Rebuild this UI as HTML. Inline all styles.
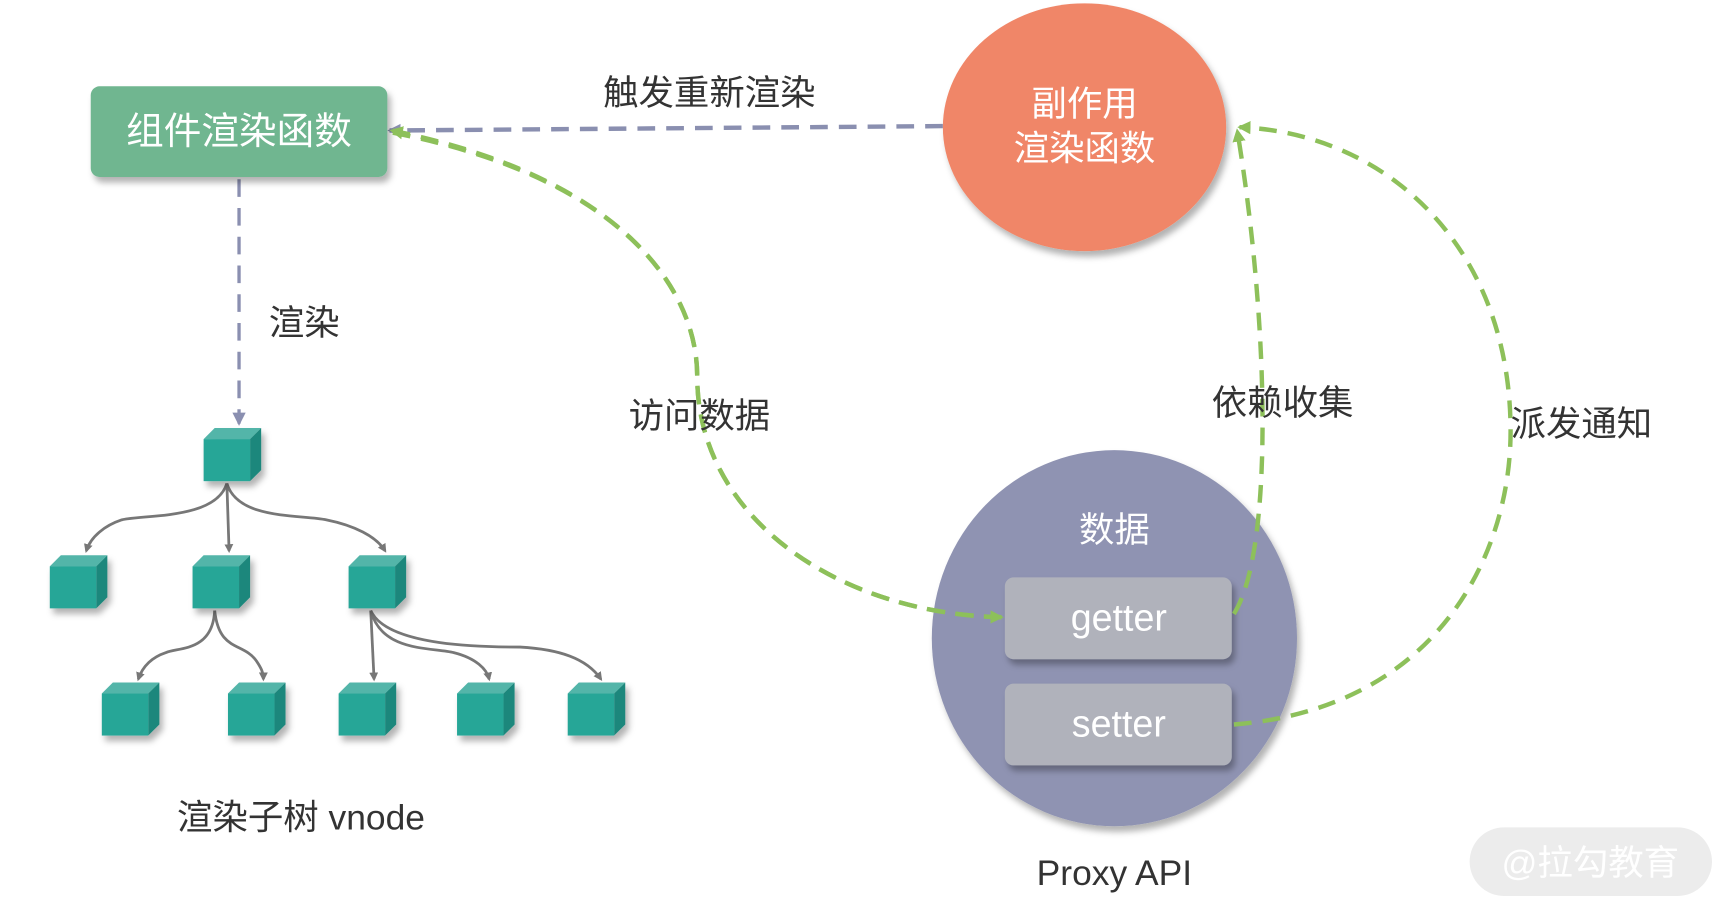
<!DOCTYPE html>
<html><head><meta charset="utf-8"><style>
html,body{margin:0;padding:0;background:#fff;}
svg{display:block;}
text{font-family:"Liberation Sans","Noto Sans CJK SC",sans-serif;}
</style></head><body>
<svg width="1712" height="907" viewBox="0 0 1547 820" preserveAspectRatio="none" xmlns="http://www.w3.org/2000/svg">
<defs>
<filter id="sh" x="-20%" y="-20%" width="150%" height="150%"><feDropShadow dx="3" dy="5" stdDeviation="3" flood-color="#000" flood-opacity="0.3"/></filter>
<marker id="ag" markerWidth="8" markerHeight="8" refX="6" refY="4" orient="auto" markerUnits="userSpaceOnUse" viewBox="0 0 8 8"><path d="M0,0 L8,4 L0,8 z" fill="#777"/></marker>
<marker id="ap" markerWidth="14" markerHeight="14" refX="10" refY="7" orient="auto" markerUnits="userSpaceOnUse"><path d="M0,1 L12,7 L0,13 z" fill="#8a8fb0"/></marker>
<marker id="agr" markerWidth="14" markerHeight="14" refX="10" refY="7" orient="auto" markerUnits="userSpaceOnUse"><path d="M0,1 L12,7 L0,13 z" fill="#8dc05a"/></marker>
<g id="cube"><polygon points="0,10 10,0 52,0 42,10" fill="#52b5a9"/><polygon points="42,10 52,0 52,38 42,48" fill="#1f877b"/><rect x="0" y="10" width="42" height="38" fill="#26a697"/></g>
</defs>

<!-- blue dashed -->
<path d="M852,114 L352,118" stroke="#8a8fb0" stroke-width="4" stroke-dasharray="16 10" fill="none" marker-end="url(#ap)"/>
<path d="M216,162 L216,383" stroke="#8a8fb0" stroke-width="3" stroke-dasharray="16 10" fill="none" marker-end="url(#ap)"/>

<rect x="82" y="78" width="268" height="82" rx="8" fill="#6fb690" filter="url(#sh)"/>
<text x="216" y="130" font-size="34" fill="#fff" text-anchor="middle">组件渲染函数</text>

<ellipse cx="980" cy="115" rx="128" ry="112" fill="#f08667" filter="url(#sh)"/>
<text x="980" y="105" font-size="32" fill="#fff" text-anchor="middle">副作用</text>
<text x="980" y="145" font-size="32" fill="#fff" text-anchor="middle">渲染函数</text>

<ellipse cx="1007" cy="577" rx="165" ry="170" fill="#8f93b2" filter="url(#sh)"/>
<text x="1007" y="490" font-size="32" fill="#fff" text-anchor="middle">数据</text>
<rect x="908" y="522" width="205" height="74" rx="8" fill="#b0b2bb" filter="url(#sh)"/>
<text x="1011" y="570" font-size="34" fill="#fff" text-anchor="middle">getter</text>
<rect x="908" y="618" width="205" height="74" rx="8" fill="#b0b2bb" filter="url(#sh)"/>
<text x="1011" y="666" font-size="34" fill="#fff" text-anchor="middle">setter</text>

<!-- green dashed -->
<g stroke="#8dc05a" stroke-width="4" stroke-dasharray="16 10" fill="none">
<path d="M905,558 C760,555 630,470 630,340 C630,260 560,160 354,118" marker-end="url(#agr)"/>
<path d="M355,120 C560,160 630,260 630,340 C630,470 760,555 905,558" marker-end="url(#agr)"/>
<path d="M1115,555 C1150,500 1148,300 1118,118" marker-end="url(#agr)"/>
<path d="M1115,655 C1300,640 1365,500 1365,390 C1365,220 1250,120 1120,115" marker-end="url(#agr)"/>
</g>

<!-- labels -->
<g font-size="32" fill="#333">
<text x="545" y="95">触发重新渲染</text>
<text x="243" y="303">渲染</text>
<text x="568" y="387">访问数据</text>
<text x="1095" y="375">依赖收集</text>
<text x="1365" y="394">派发通知</text>
<text x="160" y="750">渲染子树 vnode</text>
<text x="1007" y="800" text-anchor="middle">Proxy API</text>
</g>

<!-- tree lines -->
<g stroke="#777" stroke-width="2.5" fill="none">
<path d="M205,437 C195,470 130,465 110,470 C95,475 82,485 78,498" marker-end="url(#ag)"/>
<path d="M205,437 L207,498" marker-end="url(#ag)"/>
<path d="M205,437 C215,470 270,465 295,470 C320,475 340,485 348,498" marker-end="url(#ag)"/>
<path d="M194,552 C192,590 160,585 150,590 C135,595 128,605 125,614" marker-end="url(#ag)"/>
<path d="M194,552 C198,590 220,580 232,598 C236,604 238,608 238,614" marker-end="url(#ag)"/>
<path d="M335,552 L338,614" marker-end="url(#ag)"/>
<path d="M335,552 C345,590 390,585 410,590 C430,595 440,605 442,614" marker-end="url(#ag)"/>
<path d="M335,552 C350,585 440,585 470,585 C505,587 530,595 543,614" marker-end="url(#ag)"/>
</g>

<g filter="url(#sh)">
<use href="#cube" x="184" y="387"/>
<use href="#cube" x="45" y="502"/>
<use href="#cube" x="174" y="502"/>
<use href="#cube" x="315" y="502"/>
<use href="#cube" x="92" y="617"/>
<use href="#cube" x="206" y="617"/>
<use href="#cube" x="306" y="617"/>
<use href="#cube" x="413" y="617"/>
<use href="#cube" x="513" y="617"/>
</g>

<rect x="1328" y="748" width="219" height="62" rx="31" fill="#ececec"/>
<text x="1437" y="791" font-size="32" fill="#fff" text-anchor="middle">@拉勾教育</text>
</svg>
</body></html>
